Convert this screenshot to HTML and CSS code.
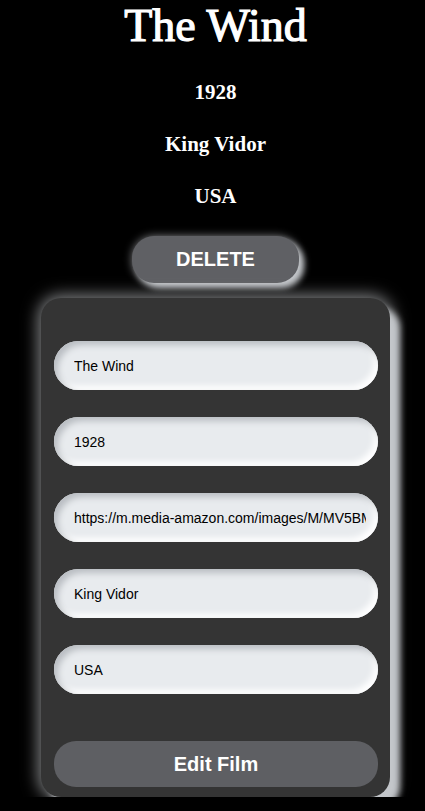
FILE: index.html
```html
<!DOCTYPE html>
<html lang="en">
<head>
<meta charset="utf-8">
<title>The Wind</title>
<link rel="stylesheet" href="styles.css">
</head>
<body>
<main class="page">
  <h1 class="title">The Wind</h1>
  <h3 class="meta meta-first">1928</h3>
  <h3 class="meta">King Vidor</h3>
  <h3 class="meta">USA</h3>
  <button class="delete-btn" type="button">DELETE</button>
  <form class="card">
    <input class="field" type="text" value="The Wind">
    <input class="field" type="text" value="1928">
    <input class="field" type="text" value="https://m.media-amazon.com/images/M/MV5BMjA3ODQ5NTM0Nl5BMl5BanBnXkFtZTgwNjI2OTc0MjE@._V1_.jpg">
    <input class="field" type="text" value="King Vidor">
    <input class="field" type="text" value="USA">
    <button class="submit-btn" type="button">Edit Film</button>
  </form>
</main>
</body>
</html>
```

FILE: styles.css
```css
html, body {
  margin: 0;
  padding: 0;
  background: #000;
}

.page {
  padding-left: 6px;
  display: flex;
  flex-direction: column;
  align-items: center;
  color: #fff;
  font-family: "Liberation Serif", "Times New Roman", serif;
}

.title {
  margin: 1px 0 0;
  font-size: 46px;
  line-height: 50px;
  font-weight: 400;
  text-align: center;
  -webkit-text-stroke: 1.2px #fff;
}

.meta {
  margin: 28px 0 0;
  font-size: 21px;
  line-height: 24px;
  font-weight: 700;
  text-align: center;
  font-variant-numeric: oldstyle-nums;
}

.meta-first {
  margin-top: 29px;
}

.delete-btn {
  margin-top: 28px;
  width: 167px;
  height: 47px;
  border: none;
  border-radius: 22px;
  background: #5f6064;
  color: #fff;
  font-family: "Liberation Sans", Arial, sans-serif;
  font-size: 20px;
  font-weight: 700;
  box-shadow: 5px 5px 6px #c4c7cb, 0 0 8px rgba(196, 199, 203, 0.6);
  padding: 0;
}

.card {
  margin: 15px 0 0;
  width: 349px;
  box-sizing: border-box;
  padding: 43px 12px 10px 13px;
  background: #343434;
  border-radius: 20px;
  display: flex;
  flex-direction: column;
  gap: 27px;
  box-shadow: 10px 10px 6px #c3c6ca, 0 0 16px 3px rgba(196, 199, 203, 0.65);
}

.field {
  display: block;
  width: 100%;
  height: 49px;
  box-sizing: border-box;
  border: none;
  border-radius: 25px;
  padding: 0 12px 0 20px;
  background: #e8ebee;
  color: #000;
  font-family: "Liberation Sans", Arial, sans-serif;
  font-size: 14px;
  outline: none;
  box-shadow: inset 4px 4px 6px #b9bdc2, inset -4px -4px 6px #ffffff;
}

.submit-btn {
  margin-top: 20px;
  height: 46px;
  border: none;
  border-radius: 22px;
  background: #5e5f63;
  color: #fff;
  font-family: "Liberation Sans", Arial, sans-serif;
  font-size: 20px;
  font-weight: 700;
  padding: 0;
}
```
